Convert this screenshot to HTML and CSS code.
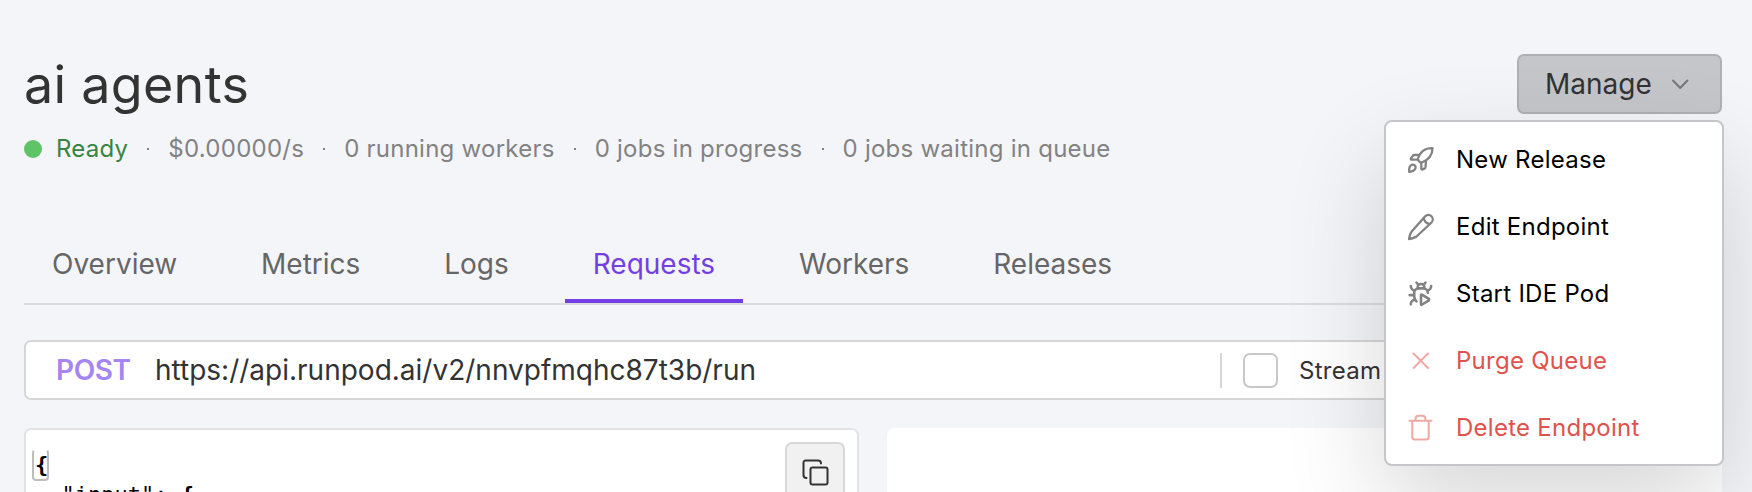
FILE: index.html
```html
<!DOCTYPE html>
<html lang="en">
<head>
<meta charset="utf-8">
<title>ai agents</title>
<link rel="stylesheet" href="styles.css">
</head>
<body>
<main class="page">
  <header class="header">
    <div class="heading">
      <h1 class="title">ai agents</h1>
      <div class="status">
        <span class="dot"></span>
        <span class="ready">Ready</span>
        <span class="sep"></span>
        <span>$0.00000/s</span>
        <span class="sep"></span>
        <span>0 running workers</span>
        <span class="sep"></span>
        <span>0 jobs in progress</span>
        <span class="sep"></span>
        <span>0 jobs waiting in queue</span>
      </div>
    </div>
    <div class="manage-wrap">
      <button class="manage">Manage
        <svg class="chevron" viewBox="0 0 20 20"><path d="M3 6.500l7.200 7.500 7.200-7.500"/></svg>
      </button>
      <div class="menu">
        <div class="item">
          <svg class="icon" viewBox="0 0 26 26"><path d="M24.500 1.200C18 .8 12.500 4 9.800 11.800c.4 2 1.500 3.200 3.500 4C20.500 13 24.500 8 24.500 1.200zM11 8H6.200c-.7 0-1.100.3-1.400.8L2.900 11.500c-.3.7 0 1.200.7 1.200h6.200M13.300 15.800v5.600c0 1 .6 1.400 1.400 1l2-1c.5-.3.7-.6.8-1.200l.5-6M1.200 24.800c-.3-3 .3-5.800 2.600-7 2.400-.6 4.300 1.200 3.700 3.400-.8 2.500-3.300 3.500-6.300 3.600z"/></svg>
          <span>New Release</span>
        </div>
        <div class="item">
          <svg class="icon" viewBox="0 0 26 26"><path d="M17.200 2.300a4.300 4.300 0 0 1 6.300 6.200L8.500 22.500c-2 1.600-4.300 2-7.400 2.500.4-3 .8-5.400 2.600-7.400zM15.800 3.800c0 3.200 2.800 6.200 6.400 6"/></svg>
          <span>Edit Endpoint</span>
        </div>
        <div class="item">
          <svg class="icon" viewBox="0.500 0.500 23 23"><path d="M12.765 21.522a.5.5 0 0 1-.765-.424v-8.196a.5.5 0 0 1 .765-.424l5.878 3.674a1 1 0 0 1 0 1.696zM14.120 3.880 16 2M18 11a4 4 0 0 0-4-4h-4a4 4 0 0 0-4 4v3a6.100 6.100 0 0 0 2 4.500M20.970 5c0 2.100-1.600 3.800-3.500 4M3 21c0-2.100 1.700-3.900 3.800-4M6 13H2M6.530 9C4.600 8.800 3 7.100 3 5M8 2l1.880 1.880M9 7.130v-1a3 3 0 1 1 6 0v1"/></svg>
          <span>Start IDE Pod</span>
        </div>
        <div class="item danger">
          <svg class="icon" viewBox="0 0 26 26"><path d="M5.500 5.500l14.500 14.500M20 5.500L5.500 20"/></svg>
          <span>Purge Queue</span>
        </div>
        <div class="item danger">
          <svg class="icon" viewBox="0 0 26 26"><path d="M1.500 5.700h22M4.300 5.700v16.300a2.400 2.400 0 0 0 2.400 2.400h11.600a2.400 2.400 0 0 0 2.400-2.400V5.700M7.600 5.500V3.700a3 3 0 0 1 3-3h3.800a3 3 0 0 1 3 3V5.500"/></svg>
          <span>Delete Endpoint</span>
        </div>
      </div>
    </div>
  </header>
  <nav class="tabs">
    <a class="tab">Overview</a>
    <a class="tab">Metrics</a>
    <a class="tab">Logs</a>
    <a class="tab active">Requests</a>
    <a class="tab">Workers</a>
    <a class="tab">Releases</a>
  </nav>
  <section class="urlbar">
    <span class="method">POST</span>
    <span class="url">https://api.runpod.ai/v2/nnvpfmqhc87t3b/run</span>
    <label class="stream"><span class="check"></span>Stream</label>
  </section>
  <section class="panels">
    <div class="editor">
      <pre class="code"><span class="brace">{</span>
  "input": <b>{</b></pre>
      <button class="copy"><svg class="copy-icon" viewBox="0 0 28 28"><rect x="9.500" y="9.500" width="17" height="17" rx="2"/><path d="M5.500 20a3 3 0 0 1-3-3V4.500a2 2 0 0 1 2-2H17a3 3 0 0 1 3 3"/></svg></button>
    </div>
    <div class="output"></div>
  </section>
</main>
</body>
</html>
```
FILE: styles.css
```css
* { box-sizing: border-box; }
body {
  margin: 0;
  background: #f4f5f9;
  font-family: Inter, "Liberation Sans", sans-serif;
  color: #333;
}
.page { height: 492px; padding: 54px 30px 0 24px; overflow: hidden; }
.header { display: flex; justify-content: space-between; height: 186px; }
.title { margin: 0; font-size: 52px; line-height: 62px; font-weight: 400; letter-spacing: .3px; }
.status {
  display: flex;
  align-items: center;
  margin-top: 17px;
  font-size: 24px;
  line-height: 32px;
  letter-spacing: .25px;
  color: #828282;
  white-space: nowrap;
}
.dot { width: 18px; height: 18px; border-radius: 50%; background: #5fc466; margin-right: 14px; }
.ready { color: #388440; }
.sep { width: 2px; height: 2px; margin: 0 19px; background: #828282; }
.manage-wrap { position: relative; width: 205px; }
.manage {
  display: flex;
  align-items: center;
  justify-content: space-between;
  width: 205px;
  height: 60px;
  padding: 0 30px 0 26px;
  border: 2px solid #b0b0b3;
  border-radius: 7px;
  background: #c5c6ca;
  font: 400 28px/32px Inter, sans-serif;
  color: #333;
}
.chevron { width: 20px; height: 20px; fill: none; stroke: #777; stroke-width: 2; stroke-linecap: round; stroke-linejoin: round; }
.menu {
  position: absolute;
  z-index: 2;
  top: 66px;
  right: -2px;
  width: 340px;
  height: 346px;
  padding: 4px 22px;
  border: 2px solid #c6c6ca;
  border-radius: 8px;
  background: #fff;
  box-shadow: 0 40px 100px rgba(0, 0, 0, .16);
}
.item { display: flex; align-items: center; gap: 22px; height: 67px; font-size: 24px; letter-spacing: .26px; color: #000; white-space: nowrap; }
.icon { width: 26px; height: 26px; fill: none; stroke: #828282; stroke-width: 2.300; stroke-linecap: round; stroke-linejoin: round; overflow: visible; }
.danger { color: #e0524c; }
.danger .icon { stroke: #f0a8a5; stroke-width: 2; }
.tabs { display: flex; gap: 27.900px; height: 65px; border-bottom: 2px solid #d9dbdf; }
.tab { height: 63px; padding: 8px 28px 0; font-size: 28px; line-height: 32px; color: #666; }
.active { color: #733fe4; border-bottom: 4px solid #733fe4; }
.urlbar {
  display: flex;
  align-items: center;
  height: 60px;
  margin-top: 35px;
  padding: 0 30px;
  border: 2px solid #d6d6d6;
  border-radius: 7px;
  background: #fff;
  font-size: 28px;
}
.method { width: 99px; font-weight: 600; letter-spacing: -.4px; color: #a585f2; }
.url { width: 1065px; }
.stream { display: flex; align-items: center; height: 35px; padding-left: 21px; border-left: 2px solid #d6d6d6; font-size: 24px; letter-spacing: .3px; }
.check { width: 35px; height: 35px; margin-right: 21px; border: 2px solid #c8c8c8; border-radius: 7px; }
.panels { display: flex; gap: 28px; height: 64px; margin-top: 28px; }
.editor { display: flex; justify-content: space-between; width: 835px; padding: 12px 12px 0 8px; border: 2px solid #e2e2e2; border-bottom: 0; border-radius: 7px 7px 0 0; background: #fff; }
.output { width: 835px; border-radius: 7px 7px 0 0; background: #fff; }
.code { height: 50px; margin: 0 0 0 -4px; padding: 8px 0 0 5px; overflow: hidden; font: 22px/30px "DejaVu Sans Mono", monospace; color: #000; }
.brace { position: relative; z-index: 0; font-weight: 700; }
/* Bracket-match highlight behind the opening brace */
.brace::before {
  content: "";
  position: absolute;
  z-index: -1;
  left: -3px;
  top: -3px;
  width: 13px;
  height: 28px;
  border: 2px solid #bdbdbd;
  border-top-color: transparent;
  border-radius: 4px;
}
.copy { display: flex; flex: none; align-items: center; justify-content: center; width: 60px; height: 60px; padding: 0; border: 2px solid #d8d8d8; border-radius: 7px; background: #f1f1f1; }
.copy-icon { width: 28px; height: 28px; fill: none; stroke: #333; stroke-width: 2; stroke-linecap: round; }
```
